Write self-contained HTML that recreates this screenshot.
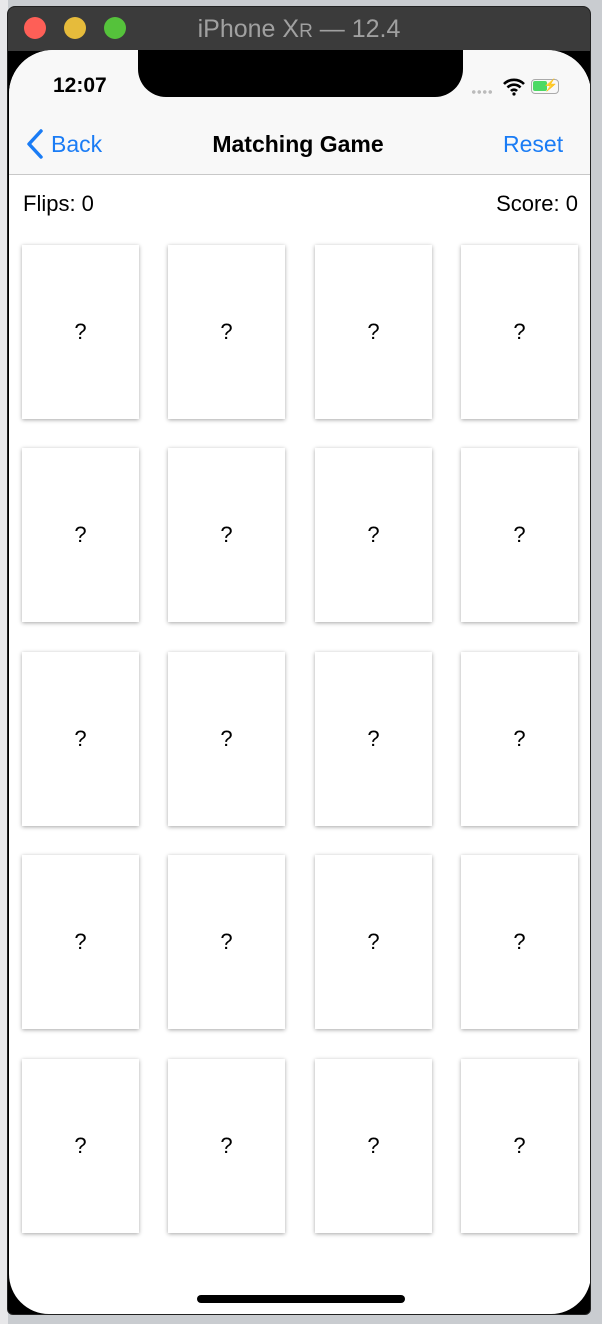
<!DOCTYPE html>
<html><head><style>
*{margin:0;padding:0;box-sizing:border-box}
body{width:602px;height:1324px;overflow:hidden;background:#c9ccd0;font-family:"Liberation Sans",sans-serif;position:relative}
.bgstrip{position:absolute;left:0;top:0;width:8px;height:1324px;background:#e8e8ea}
.win{position:absolute;left:7px;top:6px;width:584px;height:1309px;background:#000;border-radius:8px 8px 6px 6px;overflow:hidden;border:1px solid #222}
.title{position:absolute;left:0;top:0;width:100%;height:44px;background:#3b3b3b;color:#a0a0a0;font-size:25px;text-align:center;line-height:44px}
.dot{position:absolute;top:10px;width:22px;height:22px;border-radius:50%}
.screen{position:absolute;left:1px;top:43px;width:582px;height:1264px;background:#fff;border-radius:44px 44px 40px 40px;overflow:hidden}
.notch{position:absolute;left:129px;top:-2px;width:325px;height:49px;background:#000;border-radius:0 0 28px 28px}
.nav{position:absolute;left:0;top:0;width:100%;height:125px;background:#f8f8f8;border-bottom:1px solid #c8c8c8}
.time{position:absolute;left:44px;top:24px;font-size:21px;font-weight:bold;color:#000}
.card{position:absolute;width:117px;height:174px;background:#fff;box-shadow:0 1px 4px rgba(0,0,0,.35);text-align:center;line-height:174px;font-size:22px;color:#000}
.home{position:absolute;left:188px;top:1245px;width:208px;height:8px;border-radius:4px;background:#000}
</style></head><body>
<div class="bgstrip"></div>
<div class="win">
<div class="title">iPhone X<span style="font-size:19px">R</span> — 12.4
<div class="dot" style="left:16px;background:#fe5f57"></div>
<div class="dot" style="left:56px;background:#e6bb3b"></div>
<div class="dot" style="left:96px;background:#55c23b"></div>
</div>
<div class="screen">
<div class="nav">
<div class="time">12:07</div>
<div style="position:absolute;left:462px;top:40px;width:22px;height:4px;background-image:radial-gradient(circle,#bbb 1.6px,transparent 2px);background-size:5.5px 4px"></div>
<svg style="position:absolute;left:494px;top:28px" width="22" height="18" viewBox="0 0 22 18"><path d="M1 6a14 14 0 0 1 20 0M4.5 9.5a9 9 0 0 1 13 0M8 13a4 4 0 0 1 6 0" stroke="#000" stroke-width="2.6" fill="none"/><circle cx="11" cy="16" r="1.6"/></svg>
<div style="position:absolute;left:522px;top:29px;width:28px;height:15px;border:1.5px solid #aaa;border-radius:4px"><div style="position:absolute;left:1px;top:1px;width:14px;height:10px;background:#4cd964;border-radius:2px"></div><div style="position:absolute;left:11px;top:-1px;font-size:12px;line-height:13px">⚡</div></div>
<svg style="position:absolute;left:17px;top:79px" width="18" height="30" viewBox="0 0 18 30"><path d="M15 2L3 15l12 13" stroke="#1a7cf5" stroke-width="3.5" fill="none" stroke-linecap="round" stroke-linejoin="round"/></svg>
<div style="position:absolute;left:42px;top:81px;font-size:23px;color:#1a7cf5">Back</div>
<div style="position:absolute;left:-2px;width:100%;top:81px;text-align:center;font-size:23px;font-weight:bold;color:#000">Matching Game</div>
<div style="position:absolute;left:494px;top:81px;font-size:23px;color:#1a7cf5">Reset</div>
</div>
<div style="position:absolute;left:14px;top:141px;font-size:22px">Flips: 0</div>
<div style="position:absolute;right:13px;top:141px;font-size:22px">Score: 0</div>
<div class="card" style="left:13px;top:195px">?</div><div class="card" style="left:159px;top:195px">?</div><div class="card" style="left:306px;top:195px">?</div><div class="card" style="left:452px;top:195px">?</div>
<div class="card" style="left:13px;top:398px">?</div><div class="card" style="left:159px;top:398px">?</div><div class="card" style="left:306px;top:398px">?</div><div class="card" style="left:452px;top:398px">?</div>
<div class="card" style="left:13px;top:602px">?</div><div class="card" style="left:159px;top:602px">?</div><div class="card" style="left:306px;top:602px">?</div><div class="card" style="left:452px;top:602px">?</div>
<div class="card" style="left:13px;top:805px">?</div><div class="card" style="left:159px;top:805px">?</div><div class="card" style="left:306px;top:805px">?</div><div class="card" style="left:452px;top:805px">?</div>
<div class="card" style="left:13px;top:1009px">?</div><div class="card" style="left:159px;top:1009px">?</div><div class="card" style="left:306px;top:1009px">?</div><div class="card" style="left:452px;top:1009px">?</div>
<div class="notch"></div>
<div class="home"></div>
</div>
</div>
</body></html>
